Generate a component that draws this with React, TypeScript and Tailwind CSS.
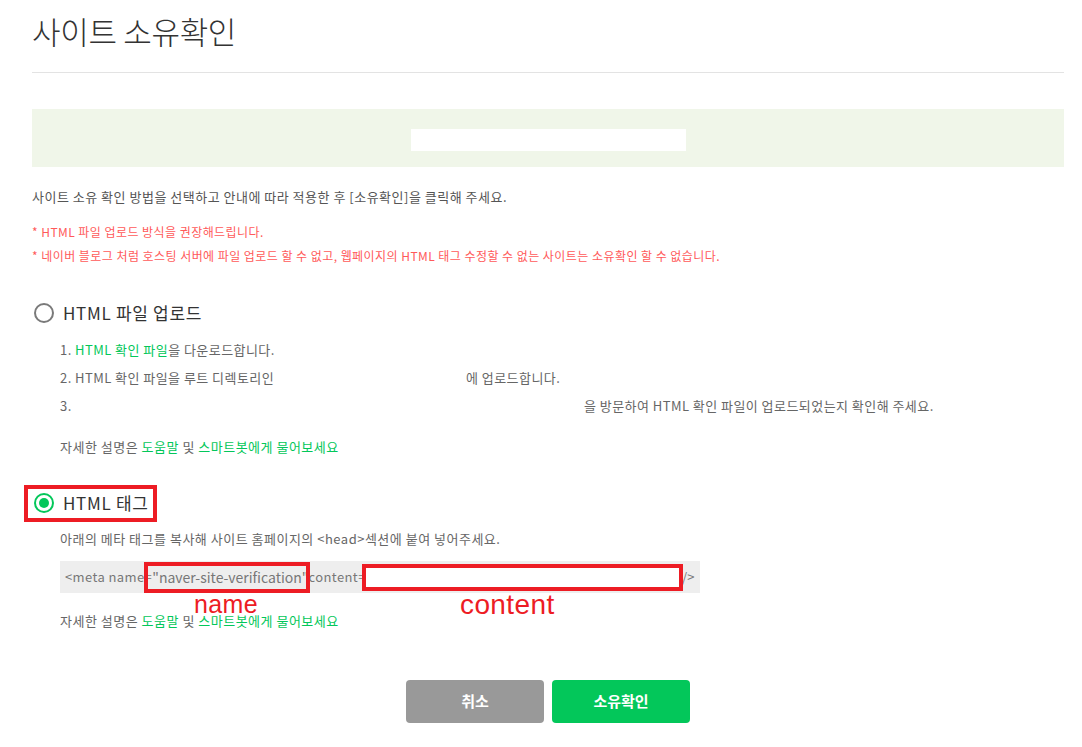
import React from "react";

const FONT = '"Noto Sans CJK KR", "Noto Sans", sans-serif';

function Radio({ checked }: { checked?: boolean }) {
  if (checked) {
    return (
      <span className="flex h-[20px] w-[20px] items-center justify-center rounded-full border-2 border-[#03c75a] bg-white">
        <span className="h-[10px] w-[10px] rounded-full bg-[#03c75a]" />
      </span>
    );
  }
  return <span className="h-[20px] w-[20px] rounded-full border-2 border-[#7a7a7a] bg-white" />;
}

function HelpLine({ tight }: { tight?: boolean }) {
  return (
    <p className={tight ? "text-[13px] leading-[16px] text-[#666] tracking-[0.5px]" : "text-[13px] leading-[24px] text-[#666] tracking-[0.5px]"}>
      자세한 설명은 <span className="text-[#03c75a]">도움말</span> 및{" "}
      <span className="text-[#03c75a]">스마트봇에게 물어보세요</span>
    </p>
  );
}

export default function App() {
  return (
    <div className="min-h-screen w-full bg-white pl-[32px] pr-[18px]" style={{ fontFamily: FONT }}>
      {/* header */}
      <div className="h-[73px] border-b border-[#e3e3e3] pt-[11px]">
        <h1 className="text-[31px] font-light leading-[40px] tracking-[-0.3px] text-[#333]">사이트 소유확인</h1>
      </div>

      {/* site box */}
      <div className="mt-[36px] flex h-[58px] justify-center bg-[#f0f6e9] pt-[20px]">
        <div className="h-[22px] w-[275px] bg-white" />
      </div>

      <p className="mt-[20px] text-[13px] leading-[20px] tracking-[0.5px] text-[#555]">
        사이트 소유 확인 방법을 선택하고 안내에 따라 적용한 후 [소유확인]을 클릭해 주세요.
      </p>
      <div className="mt-[13px] text-[12px] leading-[24px] tracking-[0.45px] text-[#ff5a5a]">
        <p>* HTML 파일 업로드 방식을 권장해드립니다.</p>
        <p>* 네이버 블로그 처럼 호스팅 서버에 파일 업로드 할 수 없고, 웹페이지의 HTML 태그 수정할 수 없는 사이트는 소유확인 할 수 없습니다.</p>
      </div>

      {/* html file upload */}
      <div className="mt-[33px] flex h-[24px] items-center gap-[9px] pl-[2px]">
        <Radio />
        <span className="text-[17px] tracking-[0.7px] text-[#333]">HTML 파일 업로드</span>
      </div>
      <div className="pl-[28px]">
        <ol className="mt-[11px] text-[13px] leading-[28px] tracking-[0.45px] text-[#666]">
          <li>
            1. <span className="text-[#03c75a]">HTML 확인 파일</span>을 다운로드합니다.
          </li>
          <li className="flex">
            <span className="w-[406px]">2. HTML 확인 파일을 루트 디렉토리인</span>
            <span>에 업로드합니다.</span>
          </li>
          <li className="flex">
            <span className="w-[524px]">3.</span>
            <span>을 방문하여 HTML 확인 파일이 업로드되었는지 확인해 주세요.</span>
          </li>
        </ol>
        <div className="mt-[15px] leading-[28px]">
          <HelpLine />
        </div>
      </div>

      {/* html tag */}
      <div className="relative mt-[32px] flex h-[24px] items-center gap-[9px] pl-[2px]">
        <Radio checked />
        <span className="text-[17px] tracking-[0.7px] text-[#333]">HTML 태그</span>
        <span className="pointer-events-none absolute left-[-8px] top-[-6px] h-[37px] w-[133px] border-4 border-[#ed1c24]" />
      </div>
      <div className="pl-[28px]">
        <p className="mt-[12px] text-[13px] leading-[24px] tracking-[0.5px] text-[#666]">
          아래의 메타 태그를 복사해 사이트 홈페이지의 &lt;head&gt;섹션에 붙여 넣어주세요.
        </p>
        <div className="relative mt-[10px] flex h-[32px] w-[640px] items-center bg-[#eeeeee] pl-[5px] pr-[5px] text-[13px] tracking-[0.4px] text-[#777]">
          <span>&lt;meta name=</span>
          <span className="text-[14px] tracking-[0px]">"naver-site-verification"</span>
          <span>content=</span>
          <span className="flex-1" />
          <span>/&gt;</span>
          <span className="pointer-events-none absolute left-[84px] top-[1px] h-[31px] w-[166px] border-4 border-[#ed1c24]" />
          <span className="pointer-events-none absolute left-[302px] top-[3px] h-[27px] w-[321px] border-4 border-[#ed1c24] bg-white" />
          <span
            className="pointer-events-none absolute left-[134px] top-[34px] text-[25px] leading-[18px] text-[#ed1c24]"
            style={{ fontFamily: '"Liberation Sans", sans-serif' }}
          >
            name
          </span>
          <span
            className="pointer-events-none absolute left-[400px] top-[35px] text-[28px] leading-[18px] text-[#ed1c24]"
            style={{ fontFamily: '"Liberation Sans", sans-serif' }}
          >
            content
          </span>
        </div>
        <div className="mt-[20px]">
          <HelpLine tight />
        </div>
      </div>

      {/* buttons */}
      <div className="mt-[51px] flex justify-center gap-[8px]">
        <button className="h-[43px] w-[138px] rounded-[4px] bg-[#999999] text-[15px] font-bold text-white">취소</button>
        <button className="h-[43px] w-[138px] rounded-[4px] bg-[#03c75a] text-[15px] font-bold text-white">소유확인</button>
      </div>
    </div>
  );
}
